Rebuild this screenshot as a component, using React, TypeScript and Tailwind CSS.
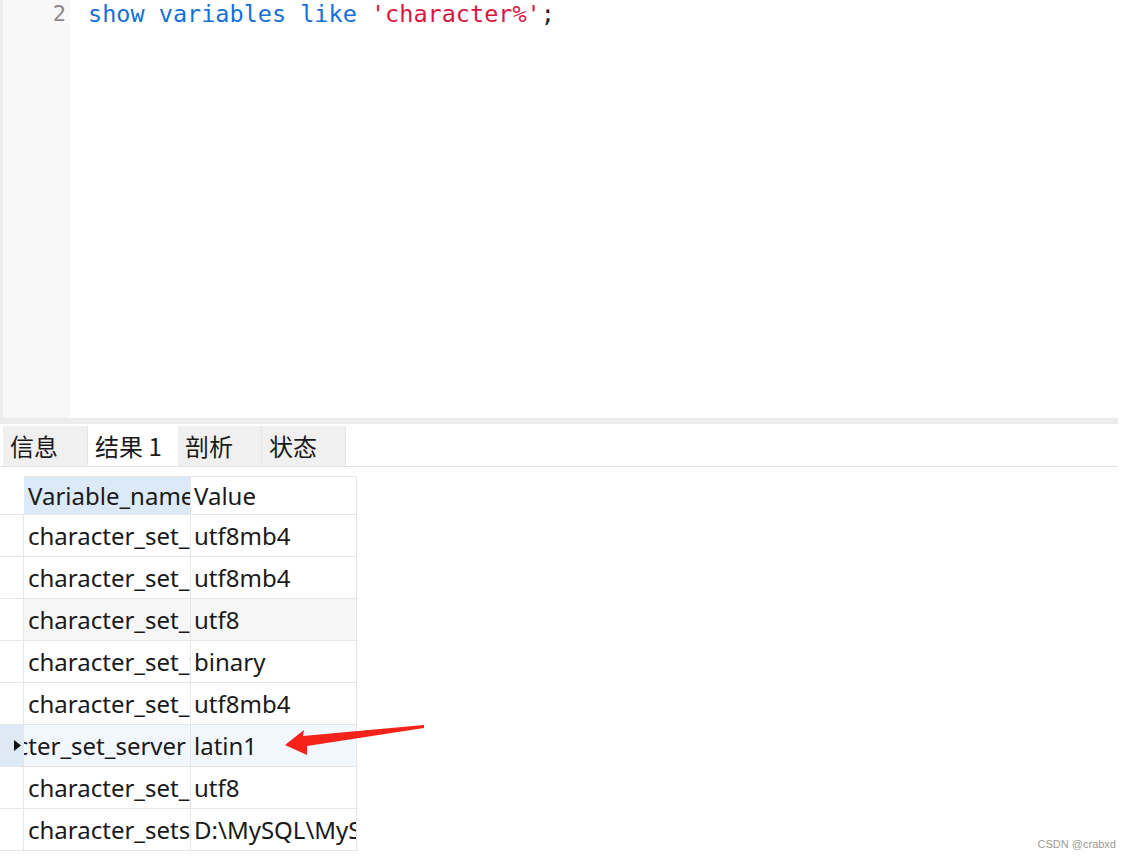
const ROWS: { name: string; value: string; selected?: boolean; shaded?: boolean }[] = [
  { name: "character_set_client", value: "utf8mb4" },
  { name: "character_set_connection", value: "utf8mb4" },
  { name: "character_set_database", value: "utf8", shaded: true },
  { name: "character_set_filesystem", value: "binary" },
  { name: "character_set_results", value: "utf8mb4" },
  { name: "character_set_server", value: "latin1", selected: true },
  { name: "character_set_system", value: "utf8" },
  { name: "character_sets_dir", value: "D:\\MySQL\\MySQL Server 8.0\\share\\charsets\\" },
];

const TABS = [
  { label: "信息", w: "w-[85px]" },
  { label: "结果 1", w: "w-[90px]", active: true },
  { label: "剖析", w: "w-[84px]" },
  { label: "状态", w: "w-[84px]" },
];

export default function App() {
  return (
    <div className="relative w-[1130px] h-[860px] overflow-hidden bg-white font-['Noto_Sans','Noto_Sans_CJK_SC',sans-serif] text-[#1a1a1a]">
      {/* Editor */}
      <div className="flex h-[418px] w-[1118px]">
        <div className="w-[70px] shrink-0 border-l-[3px] border-[#ededed] bg-[#f8f8f8] pr-[4px] text-right font-['DejaVu_Sans_Mono',monospace] text-[22px] leading-[28px] text-[#8a8a8a]">
          2
        </div>
        <div className="pl-[18px] font-['DejaVu_Sans_Mono',monospace] text-[23.5px] leading-[28px] whitespace-pre">
          <span className="text-[#1670d6]">show variables like </span>
          <span className="text-[#d8173f]">'character%'</span>
          <span className="text-[#222]">;</span>
        </div>
      </div>
      <div className="h-[6px] w-[1118px] bg-[#ececec]" />

      {/* Tabs */}
      <div className="mt-[2px] flex h-[41px] w-[1118px] border-b border-[#e3e3e3] pl-[3px]">
        {TABS.map((t) => (
          <div
            key={t.label}
            className={`${t.w} flex items-center pl-[7px] text-[24px] leading-none ${
              t.active ? "bg-white" : "bg-[#f0f0f0] border-r border-[#e6e6e6]"
            }`}
          >
            <span className="font-['Noto_Sans_CJK_SC',sans-serif]">{t.label}</span>
          </div>
        ))}
      </div>

      {/* Result grid */}
      <div className="mt-[9px] w-[358px] text-[24px]">
        <div className="flex h-[38px]">
          <div className="w-[24px] shrink-0" />
          <div className="flex w-[166px] items-center overflow-hidden whitespace-nowrap border-t border-[#e6e6e6] bg-[#dceaf7] pl-[4px]">
            Variable_name
          </div>
          <div className="flex w-[167px] items-center border-t border-r border-l border-[#e6e6e6] pl-[3px]">
            Value
          </div>
        </div>
        {ROWS.map((r) => (
          <div key={r.name} className="flex h-[42px] border-t border-[#e6e6e6]">
            <div
              className={`flex w-[24px] shrink-0 items-center justify-end border-r border-[#e6e6e6] pr-[2px] ${
                r.selected ? "bg-[#dde9f5]" : ""
              }`}
            >
              {r.selected && (
                <svg width="7" height="11" viewBox="0 0 7 11">
                  <path d="M0 0 L7 5.5 L0 11 Z" fill="#111" />
                </svg>
              )}
            </div>
            <div
              className={`flex w-[166px] items-center overflow-hidden whitespace-nowrap ${
                r.selected ? "justify-end bg-[#f1f7fd] pr-[4px]" : r.shaded ? "bg-[#f7f7f7] pl-[4px]" : "pl-[4px]"
              }`}
            >
              {r.name}
            </div>
            <div
              className={`flex w-[167px] items-center overflow-hidden whitespace-nowrap border-r border-l border-[#e6e6e6] pl-[3px] ${
                r.selected ? "bg-[#f1f7fd]" : r.shaded ? "bg-[#f7f7f7]" : ""
              }`}
            >
              {r.value}
            </div>
          </div>
        ))}
        <div className="h-0 border-t border-[#e6e6e6]" />
      </div>

      {/* Annotation arrow */}
      <svg className="absolute left-[280px] top-[720px]" width="150" height="40" viewBox="0 0 150 40">
        <path d="M5 25 L24 10 L23 16 L144 5 L144 8 L27 26 L27 35 Z" fill="#f5221a" />
      </svg>

      <div className="absolute right-[14px] bottom-[8px] font-['Liberation_Sans',sans-serif] text-[11px] text-[#9a9a9a]">
        CSDN @crabxd
      </div>
    </div>
  );
}
